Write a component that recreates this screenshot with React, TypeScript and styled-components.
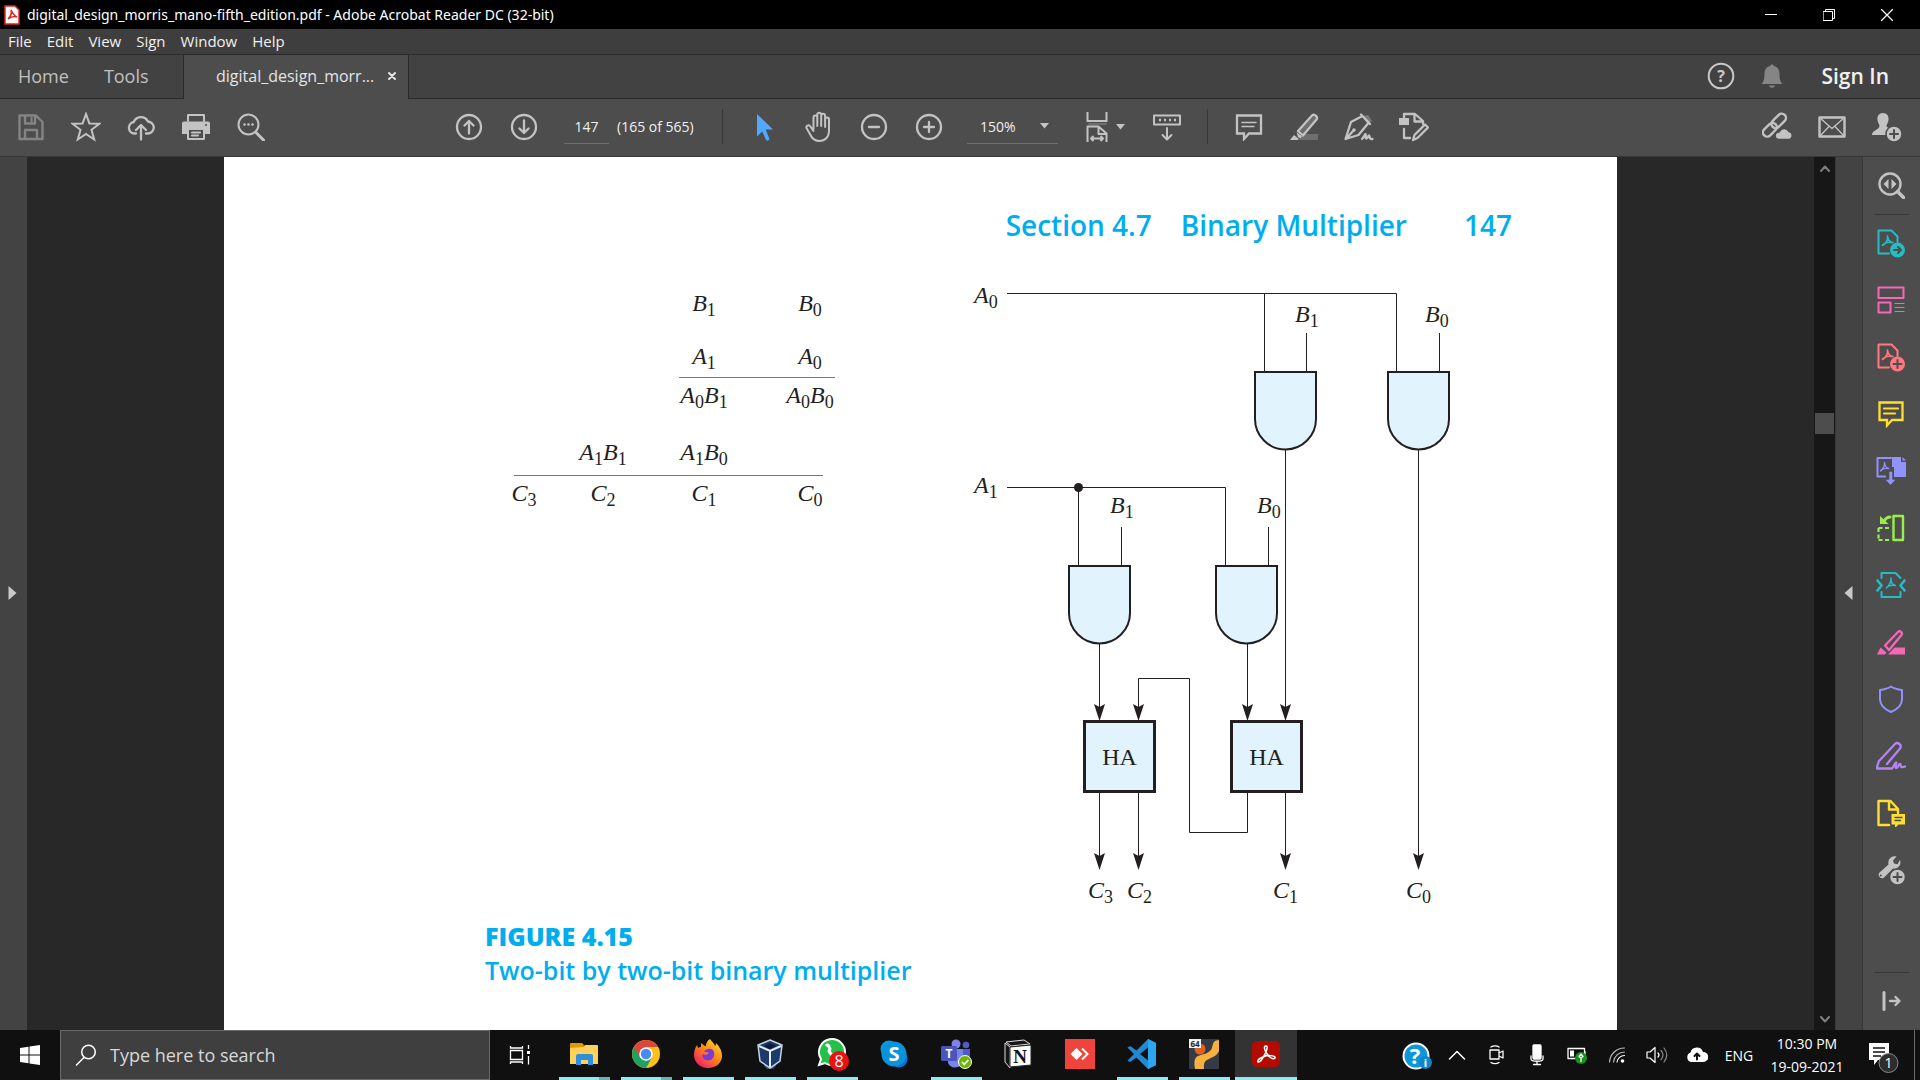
import React from "react";
import styled, { createGlobalStyle } from "styled-components";

const GlobalStyle = createGlobalStyle`
  * { box-sizing: border-box; }
  body { margin: 0; background: #282828; font-family: "Open Sans", "Noto Sans", sans-serif; }
  button, input, select { font: inherit; color: inherit; background: none; border: 0; padding: 0; margin: 0; }
  svg { display: block; flex: none; }
`;

const Shell = styled.div`
  display: flex;
  flex-direction: column;
  height: 100vh;
  overflow: hidden;
  color: #f0f0f0;
  font-size: 14px;
`;

/* ---------- title, menu and tabs ---------- */

const TitleBar = styled.header`
  display: flex;
  align-items: center;
  height: 29px;
  padding-left: 4px;
  background: #000;
  color: #fff;
`;
const Title = styled.span`
  flex: 1;
  margin-left: 7px;
  font-family: "Noto Sans", sans-serif;
  white-space: nowrap;
`;
const WindowButton = styled.button`
  display: grid;
  place-items: center;
  width: 58px;
  height: 29px;
  &:last-child { margin-right: 4px; }
`;
const MenuBar = styled.nav`
  display: flex;
  align-items: center;
  gap: 15px;
  height: 26px;
  padding: 0 0 1px 8px;
  background: #3e3e3e;
  border-bottom: 1px solid #2a2a2a;
  font-size: 15px;
`;
const MenuItem = styled.button`
  line-height: 22px;
`;
const TabBar = styled.div`
  display: flex;
  height: 44px;
  background: #424242;
`;
const TabStart = styled.div`
  display: flex;
  align-items: center;
  gap: 35px;
  width: 184px;
  padding: 0 0 2px 18px;
  border-bottom: 1px solid #2a2a2a;
  border-right: 1px solid #2a2a2a;
  color: #c0c0c0;
  font-size: 18px;
`;
const TabButton = styled.button``;
const DocTab = styled.div`
  display: flex;
  align-items: center;
  gap: 11px;
  width: 225px;
  padding: 0 0 2px 32px;
  background: #4d4d4d;
  border-right: 1px solid #2a2a2a;
  color: #e4e4e4;
  font-size: 16px;
`;
const DocName = styled.span`
  width: 160px;
  white-space: nowrap;
`;
const TabEnd = styled.div`
  display: flex;
  flex: 1;
  justify-content: flex-end;
  align-items: center;
  padding: 0 31px 1px 0;
  border-bottom: 1px solid #2a2a2a;
`;
const HeaderIcon = styled.button`
  display: grid;
  place-items: center;
  width: 51px;
`;
const SignIn = styled.button`
  margin-left: 24px;
  font-size: 21px;
  font-weight: 600;
  white-space: nowrap;
`;

/* ---------- toolbar ---------- */

const Toolbar = styled.div`
  display: flex;
  align-items: center;
  height: 58px;
  padding: 0 6px 2px 3px;
  background: #4d4d4d;
  border-bottom: 1px solid #383838;
  color: #c3c3c3;
`;
const Group = styled.div<{ $left?: number; $push?: boolean }>`
  display: flex;
  align-items: center;
  margin-left: ${(p) => (p.$push ? "auto" : `${p.$left ?? 0}px`)};
`;
const ToolButton = styled.button<{ $color?: string }>`
  display: flex;
  align-items: center;
  justify-content: center;
  gap: 8px;
  width: 55px;
  height: 55px;
  color: ${(p) => p.$color ?? "#c3c3c3"};
`;
const PageInput = styled.input`
  width: 45px;
  height: 34px;
  margin-left: 13px;
  border-bottom: 1px solid #6e6e6e;
  text-align: center;
  color: #f0f0f0;
`;
const PageCount = styled.label`
  width: 92px;
  margin-left: 8px;
  color: #f0f0f0;
  white-space: nowrap;
`;
const Divider = styled.span`
  width: 1px;
  height: 35px;
  margin: 0 13px;
  background: #383838;
`;
const ZoomBox = styled.label`
  display: grid;
  grid-template-columns: 1fr 27px;
  align-items: center;
  width: 91px;
  height: 34px;
  margin: 0 13px 0 11px;
  border-bottom: 1px solid #6e6e6e;
`;
const ZoomSelect = styled.select`
  appearance: none;
  grid-area: 1 / 1 / 2 / 3;
  width: 100%;
  padding-left: 13px;
  color: #f0f0f0;
`;
const ZoomCaret = styled.span`
  grid-area: 1 / 2 / 2 / 3;
  display: grid;
  place-items: center;
  pointer-events: none;
`;

/* ---------- document area ---------- */

const Workspace = styled.main`
  display: flex;
  flex: 1;
  min-height: 0;
  background: #282828;
`;
const Rail = styled.button<{ $width: number }>`
  display: grid;
  place-items: center;
  width: ${(p) => p.$width}px;
  padding: 0 2px 2px 0;
  background: #434343;
  color: #c9c9c9;
`;
const Canvas = styled.div`
  display: flex;
  flex: 1;
  justify-content: center;
  min-width: 0;
  overflow: hidden;
`;
const Page = styled.article`
  flex: 0 1 1393px;
  padding: 52px 105px 0 261px;
  background: #fff;
  color: #231f20;
`;
const RunningHead = styled.div`
  display: flex;
  justify-content: flex-end;
  gap: 29px;
  color: #00aeef;
  font: 600 28px/32px "Open Sans", sans-serif;
  white-space: nowrap;
`;
const Folio = styled.span`
  margin-left: 28px;
`;
const Figure = styled.figure`
  display: flex;
  flex-wrap: wrap;
  column-gap: 105px;
  margin: 39px 0 0;
`;
const Equation = styled.div`
  display: grid;
  grid-template-columns: 78px 80px 122px 90px;
  grid-template-rows: 53px 35px 4px 57px 37px 4px 28px;
  justify-items: center;
  align-items: start;
  margin-top: 9px;
  font: italic 24px/28px "Liberation Serif", serif;
`;
const Term = styled.span<{ $col: number; $row: number }>`
  grid-column: ${(p) => p.$col};
  grid-row: ${(p) => p.$row};
  white-space: nowrap;
`;
const Sub = styled.sub`
  font-size: 18px;
  font-style: normal;
  line-height: 0;
  vertical-align: -5px;
`;
const SumLine = styled.span<{ $row: number; $from: number; $left: number; $right: number }>`
  grid-column: ${(p) => p.$from} / 5;
  grid-row: ${(p) => p.$row};
  justify-self: stretch;
  height: 1px;
  margin: 0 ${(p) => p.$right}px 0 ${(p) => p.$left}px;
  background: #00a0dc;
`;
const Caption = styled.figcaption`
  flex-basis: 100%;
  margin-top: 9px;
  color: #00aeef;
  font: 600 25px/34px "Open Sans", sans-serif;
`;
const FigureNumber = styled.div`
  font-weight: 800;
`;

const ScrollBar = styled.div`
  display: flex;
  flex-direction: column;
  width: 22px;
  padding: 0 1px;
  background: #171717;
  border-right: 1px solid #383838;
  color: #7e7e7e;
`;
const ScrollArrow = styled.button`
  display: grid;
  place-items: center;
  height: 22px;
`;
const ScrollSpace = styled.span<{ $grow: number }>`
  flex: ${(p) => p.$grow};
`;
const ScrollThumb = styled.div`
  height: 21px;
  background: #4d4d4d;
`;
const SidePanel = styled.aside`
  display: flex;
  flex-direction: column;
  align-items: center;
  width: 58px;
  padding-right: 1px;
  background: #4d4d4d;
  border-left: 1px solid #383838;
`;
const SideButton = styled.button<{ $color?: string }>`
  display: grid;
  place-items: center;
  width: 56px;
  height: 57px;
  padding-bottom: 1px;
  color: ${(p) => p.$color ?? "#c3c3c3"};
`;
const SideRule = styled.span<{ $bottom?: boolean }>`
  width: 35px;
  height: 1px;
  margin-top: ${(p) => (p.$bottom ? "auto" : "0")};
  background: #383838;
`;

/* ---------- taskbar ---------- */

const Taskbar = styled.footer`
  display: flex;
  height: 50px;
  background: #101010;
  color: #fff;
`;
const StartButton = styled.button`
  display: grid;
  place-items: center;
  width: 60px;
`;
const SearchBox = styled.label`
  display: flex;
  align-items: center;
  gap: 13px;
  width: 430px;
  padding-left: 14px;
  background: #3f3f3f;
  border: 1px solid #6a6a6a;
`;
const SearchInput = styled.input`
  flex: 1;
  font-size: 18px;
  outline: none;
  &::placeholder { color: #d8d8d8; opacity: 1; }
`;
const TaskViewButton = styled.button`
  display: grid;
  place-items: center;
  width: 60px;
`;
const AppList = styled.div`
  display: flex;
  margin-left: 3px;
`;
const TaskButton = styled.button<{ $open?: boolean; $active?: boolean; $stack?: boolean }>`
  display: grid;
  grid-template-rows: 1fr 3px;
  justify-items: center;
  align-items: center;
  width: 62px;
  background: ${(p) => (p.$active ? "#333" : "none")};
  &::after {
    content: "";
    grid-row: 2;
    width: ${(p) => (p.$active ? "62px" : "51px")};
    height: 3px;
    background: ${(p) =>
      !p.$open ? "none" : p.$stack ? "linear-gradient(90deg, #8fe8f2 40px, #6cb0b8 40px)" : "#8fe8f2"};
  }
`;
const Tray = styled.div`
  display: flex;
  align-items: center;
  margin-left: auto;
`;
const TrayButton = styled.button<{ $wide?: boolean }>`
  display: grid;
  place-items: center;
  width: ${(p) => (p.$wide ? 44 : 40)}px;
  height: 50px;
`;
const Clock = styled.button`
  width: 90px;
  margin-left: 1px;
  line-height: 23px;
  text-align: center;
`;
const Notices = styled.button`
  margin: 5px 15px 0 17px;
`;
const ShowDesktop = styled.button`
  width: 6px;
  height: 50px;
  border-left: 1px solid #6a6a6a;
`;

/* ---------- icons ---------- */

type IconProps = { w?: number; h?: number; sw?: number; children: React.ReactNode };
const Line = ({ w = 28, h = 28, sw = 2, children }: IconProps) => (
  <svg width={w} height={h} viewBox={`0 0 ${w} ${h}`} fill="none" stroke="currentColor" strokeWidth={sw} strokeLinejoin="round" strokeLinecap="round" aria-hidden>
    {children}
  </svg>
);

const fillOnly = { fill: "currentColor", stroke: "none" };
const PANEL = "#4d4d4d";

const Caret = () => (
  <svg width="9" height="6" viewBox="0 0 9 6" aria-hidden><path d="M0 0h9L4.500 5.500z" fill="#c3c3c3" /></svg>
);

const SaveIcon = () => (
  <Line sw={2.4}><path d="M2.500 2.500h16.500l6.500 6.500v17h-23zM8 3v7.500h10V3M8 25.500V17h12v8.500" /><path d="M14.500 5v4" strokeWidth="2" /></Line>
);
const StarIcon = () => (
  <Line w={30} h={30}><path d="M15 2l3.400 9.400 10 .3-7.900 6.100 2.700 9.700L15 21.900l-8.200 5.600 2.700-9.700-7.900-6.100 10-.3z" strokeLinejoin="miter" /></Line>
);
const CloudUpIcon = () => (
  <Line sw={2.300}><path d="M9 20.500H7.500a5.800 5.800 0 01-.8-11.500A7.800 7.800 0 0121 8.500a6 6 0 01-.5 12h-1.500M14 26.500V13M9 17l5-5 5 5" /></Line>
);
const PrintIcon = () => (
  <Line>
    <path d="M6 8V2h16v6" />
    <path d="M2 8.500h24a2 2 0 012 2V21h-5v-4H5v4H0V10.500a2 2 0 012-2z" {...fillOnly} />
    <path d="M6 17v9h16v-9M10 19.500h8M10 22.500h6" /><circle cx="24" cy="12" r="1" fill={PANEL} stroke="none" />
  </Line>
);
const FindIcon = () => (
  <Line>
    <circle cx="11.500" cy="11.500" r="10" /><path d="M19 19.500l8 8" strokeWidth="3" />
    <circle cx="7.500" cy="11.500" r="1.300" {...fillOnly} /><circle cx="11.500" cy="11.500" r="1.300" {...fillOnly} /><circle cx="15.500" cy="11.500" r="1.300" {...fillOnly} />
  </Line>
);
const RoundIcon = ({ d, sw = 2.300 }: { d: string; sw?: number }) => (
  <Line sw={sw}><circle cx="14" cy="14" r="12" /><path d={d} /></Line>
);
const PointerIcon = () => (
  <Line><path d="M7 1v22.500l5.200-5 3.600 8a1.800 1.800 0 003.300-1.500L15.700 16.500H23z" {...fillOnly} /></Line>
);
const HandIcon = () => (
  <Line w={30} h={32}>
    <path d="M9.500 18V6.500a1.900 1.900 0 013.800 0V15M13.300 14V3.800a1.900 1.900 0 013.900 0V15M17.200 14V4.800a1.900 1.900 0 013.900 0V16M21.100 15V8.500a1.900 1.900 0 013.900 0V20c0 6-4 10-9.500 10-5 0-7.500-2.500-9-6L2.500 17c-.8-2.200 2-3.800 3.600-1.800L9.500 20" />
  </Line>
);
const FitIcon = () => (
  <Line w={22} h={30}>
    <path d="M1.500 0v9h19V0" strokeLinecap="butt" strokeLinejoin="miter" /><path d="M3 12h17" stroke="#6e6e6e" strokeWidth="2" />
    <path d="M1.500 30V14.500h11l8 7V30M12.500 15v7h8M5 26.500h12M7.500 24L5 26.500 7.500 29M14.500 24l2.500 2.500-2.500 2.500" strokeLinecap="butt" />
  </Line>
);
const KeyboardIcon = () => (
  <Line>
    <path d="M1 2.500h26v9H1zM14 15v11M9.500 22l4.500 4.500 4.500-4.500" /><path d="M6 7h17" strokeWidth="2.500" strokeDasharray="2 3" strokeLinecap="butt" />
  </Line>
);
const CommentIcon = () => (
  <Line><path d="M2 2.500h24v18H14l-5 5.500v-5.500H2z" strokeLinejoin="miter" strokeWidth="2.300" /><path d="M7 9.500h14M7 13.500h12" strokeWidth="1.500" /></Line>
);
const HighlightIcon = () => (
  <Line w={30}>
    <path d="M10 27l5-6h14v6z" fill="#6e6e6e" stroke="none" />
    <path d="M9 18L23 2.500c2-2 6.500 1 4.500 4L14 22.500z" fill="#6e6e6e" strokeWidth="2.300" /><path d="M7.500 19l5.500 4.500-1.500 2-2.500-1.500zM1 27l4-5 5 4-1.500 1z" {...fillOnly} />
  </Line>
);
const SignIcon = () => (
  <Line w={30} sw={2.300}>
    <path d="M18 3l6-1 4 6-4.500 3z" fill="#7a7a7a" stroke="none" />
    <path d="M17 1.500l9 9.500M17.500 3.500L7 9 1.500 26l13-4L24 10.500M2 26l7-8" /><circle cx="10" cy="17" r="1.800" {...fillOnly} />
    <path d="M18 26c2-2 3-5 3.500-5s-.5 5 1 4.500 1.500-3 2.500-3-.5 4 3.500 3.500" />
  </Line>
);
const EditPdfIcon = () => (
  <Line w={30} h={30} sw={2.300}>
    <path d="M0 6h10v7H0z" {...fillOnly} />
    <path d="M5 6V2h11l8 7v3M15.500 2v7.500H24M5 17v9h6" /><path d="M14 28l1.500-5L26 12.500l3 3L18.500 26z" />
  </Line>
);
const LinkCloudIcon = () => (
  <Line w={30} h={30} sw={2.400}>
    <g transform="rotate(-45 13 13)"><rect x="-2" y="8.500" width="16" height="8.500" rx="4.250" /><rect x="10" y="8.500" width="17" height="8.500" rx="4.250" /></g>
    <path d="M17 28a4 4 0 010-8.500 5.500 5.500 0 0110-.5 4.600 4.600 0 010 9z" fill="currentColor" stroke={PANEL} />
  </Line>
);
const MailIcon = () => (
  <Line w={28} h={24}><path d="M1.500 2.500h25v19h-25z" strokeWidth="2.400" /><path d="M2 3l12 10.500L26 3M2 21l9-9.500M26 21l-9-9.500" strokeWidth="1.300" /></Line>
);
const AddUserIcon = () => (
  <Line w={30} h={30}>
    <path d="M11 1c4 0 6 3 5.500 7-.3 3-2 4-2 6s6 3 7.500 5v4H0c0-5 7-5 7.500-9 0-2-1.700-3-2-6C5 4 7 1 11 1z" {...fillOnly} />
    <circle cx="22" cy="22" r="8" fill="currentColor" stroke={PANEL} strokeWidth="1.500" /><path d="M22 18v8M18 22h8" stroke={PANEL} />
  </Line>
);
const SideSearchIcon = () => (
  <Line><circle cx="13" cy="13" r="10.500" strokeWidth="2.400" /><path d="M20.500 20.500l6 6" strokeWidth="3.500" /><path d="M11.500 8v10L6.500 13zM14.500 8v10l5-5z" {...fillOnly} /></Line>
);
const Swoosh = "M11.500 8c.5 4-1 7-5 9.500M11.500 8c.3 4 2.500 6 5.500 6.500M6.500 17c2-2 6-3 9-2.500";
const PdfBadgeIcon = ({ d }: { d: string }) => (
  <Line w={30} h={30}>
    <path d="M13 25.500H2.500v-23h13l6 6V14" /><path d={Swoosh} strokeWidth="1.600" />
    <circle cx="21.500" cy="22" r="7.500" {...fillOnly} /><path d={d} stroke={PANEL} strokeWidth="2" />
  </Line>
);
const OrganizeIcon = () => (
  <Line><path d="M1.500 1.500h25v10.500h-25zM1.500 16.500h12v10h-12z" /><path d="M18 17.500h9M18 21.500h9M18 25.500h9" strokeWidth="1.200" /></Line>
);
const SideCommentIcon = () => (
  <Line><path d="M2.500 2.500h23v17.500H15l-5 5.500V20H2.500z" strokeLinejoin="miter" strokeWidth="2.300" /><path d="M7 8.500h14M7 13.500h11" strokeWidth="2.200" /></Line>
);
const CombineIcon = () => (
  <Line w={30} h={30}>
    <path d="M15 2H1.500v18.500H9" /><path d="M8.500 6.500c.5 4-1 6-4 8.500M8.500 7c.5 4 2 5 4 5.500M5 14c2-1.500 4-2 7-1.500" strokeWidth="1.400" />
    <path d="M16 1h9v5h5v15H18V11h-2z" {...fillOnly} /><path d="M26.500 1v3.500H30z" {...fillOnly} />
    <path d="M12.500 15v8H8l6.500 7 6.500-7h-4v-8z" fill="currentColor" stroke={PANEL} strokeWidth="1.500" />
  </Line>
);
const RotateIcon = () => (
  <Line><path d="M16.500 2h9.500v24h-9.500z" strokeWidth="2.400" /><path d="M1.500 14h11M1.500 26h11M1.500 14v12" strokeDasharray="4 2.500" strokeWidth="2.200" strokeLinecap="butt" /><path d="M3 2v8h8.500z" {...fillOnly} /><path d="M7 7c1.500-2.500 3-4 6-4" strokeWidth="3" /></Line>
);
const CompressIcon = () => (
  <Line w={30}>
    <path d="M5.500 7V2h14l5 5M5.500 21v5h19v-5" /><path d="M1.500 9.500l4 5-4 5M28.500 9.500l-4 5 4 5" strokeWidth="2.600" /><path d="M15 7c0 4-1 7-4.500 10M15 8c0 4 2 6 4.500 6.500M11 16c2-1.500 5-2 8-1.500" strokeWidth="1.500" />
  </Line>
);
const RedactIcon = () => (
  <Line><path d="M8 17.500L21 4c2-2 5 .5 3.500 3L12 22z" strokeWidth="2.300" /><path d="M0 26.500l3.500-7 6 5-1.500 2zM11 26.500l6.500-7H28v7z" {...fillOnly} /></Line>
);
const ShieldIcon = () => (
  <Line><path d="M14 1.500c3.500 2.500 6.500 3 11 3.500v9c0 6-5 10.500-11 13-6-2.500-11-7-11-13V5c4.500-.5 7.500-1 11-3.500z" /></Line>
);
const FillSignIcon = () => (
  <Line w={30} h={30} sw={2.300}><path d="M3 20L19 3c2.500-2.500 7.500 1 5 4.500L11 23M3 20c-1 3-2 5-2 7.500h15c2-2 3-6 4-6s-1.500 6 .5 5.500 2-4 3.500-4-1 5 5 2.500" /></Line>
);
const ReviewIcon = () => (
  <Line><path d="M12 26H1.500V2h12l7.500 8v4M12 2v8.500h9" strokeWidth="2.400" /><path d="M14.500 15H28v10.500h-6.500L18 29v-3.500h-3.500z" {...fillOnly} /><path d="M18 18.500h7M18 21.500h5.500" stroke={PANEL} strokeWidth="1.400" /></Line>
);
const MoreToolsIcon = () => (
  <Line w={30} h={30}>
    <path d="M3 18L12.500 9.500C11.500 4 15.500 0 20.500 1.500L17 5.500l1 3 3.500.7L24 5c2 5-2.500 9.500-7 8.500L7.500 23A3.600 3.600 0 013 18z" {...fillOnly} /><circle cx="4.800" cy="20.500" r="1" fill={PANEL} stroke="none" />
    <circle cx="21.500" cy="22" r="8" fill="currentColor" stroke={PANEL} strokeWidth="1.500" /><path d="M21.500 18v8M17.500 22h8" stroke={PANEL} />
  </Line>
);
const CollapseIcon = () => (
  <Line w={20} h={20}><path d="M3 1.500v17" strokeWidth="3" /><path d="M9 10h9.500M14.500 6l4 4-4 4" strokeWidth="2.300" /></Line>
);

/* ---------- circuit drawing ---------- */

const Wiring = styled.svg`
  font: italic 24px "Liberation Serif", serif;
`;

const Label = ({ x, y, v, n }: { x: number; y: number; v: string; n: string }) => (
  <text x={x} y={y} fill="#231f20">{v}<tspan dy="5" fontSize="18" fontStyle="normal">{n}</tspan></text>
);
const Gate = ({ x, y }: { x: number; y: number }) => (
  <path d={`M${x} ${y}h61v47a30.500 30.500 0 01-61 0z`} fill="#e1f3fd" stroke="#231f20" strokeWidth="2" />
);
const Adder = ({ x, y }: { x: number; y: number }) => (
  <g>
    <rect x={x} y={y} width="70" height="70" fill="#e1f3fd" stroke="#231f20" strokeWidth="3" />
    <text x={x + 35} y={y + 43} textAnchor="middle" fontStyle="normal" fill="#231f20">HA</text>
  </g>
);
const Arrow = ({ x, y }: { x: number; y: number }) => (
  <path d={`M${x} ${y}l-5.500-17 5.500 3 5.500-3z`} fill="#231f20" />
);

const Circuit = () => (
  <Wiring width="500" height="630" viewBox="960 280 500 630" role="img" aria-label="Two-bit multiplier circuit">
    <g fill="none" stroke="#231f20" strokeWidth="1">
      <path d="M1007 293.500h389.500V371M1264.500 293.500V371M1306.500 333V371M1439.500 333V371" />
      <path d="M1007 487.500h218.500V565M1078.500 487.500V565M1121.500 527V565M1268.500 527V565" />
      <path d="M1285.500 450V710M1418.500 450V860M1099.500 644V710M1247.500 644V710" />
      <path d="M1247.500 793V832.500H1189.500V678.500H1138.500V710M1099.500 793V860M1138.500 793V860M1285.500 793V860" />
    </g>
    <circle cx="1078.500" cy="487.500" r="4.500" fill="#231f20" />
    <Gate x={1255} y={372} /><Gate x={1388} y={372} /><Gate x={1069} y={566} /><Gate x={1216} y={566} />
    <Arrow x={1099.5} y={721} /><Arrow x={1138.5} y={721} /><Arrow x={1247.5} y={721} /><Arrow x={1285.5} y={721} />
    <Arrow x={1099.5} y={870} /><Arrow x={1138.5} y={870} /><Arrow x={1285.5} y={870} /><Arrow x={1418.5} y={870} />
    <Adder x={1084.5} y={721.5} /><Adder x={1231.5} y={721.5} />
    <Label x={974} y={303} v="A" n="0" /><Label x={974} y={493} v="A" n="1" />
    <Label x={1295} y={322} v="B" n="1" /><Label x={1425} y={322} v="B" n="0" />
    <Label x={1110} y={513} v="B" n="1" /><Label x={1257} y={513} v="B" n="0" />
    <Label x={1088} y={898} v="C" n="3" /><Label x={1127} y={898} v="C" n="2" />
    <Label x={1273} y={898} v="C" n="1" /><Label x={1406} y={898} v="C" n="0" />
  </Wiring>
);

/* ---------- taskbar pictures ---------- */

const Pic = ({ w = 30, h = 30, children }: { w?: number; h?: number; children: React.ReactNode }) => (
  <svg width={w} height={h} viewBox={`0 0 ${w} ${h}`} aria-hidden>{children}</svg>
);
const tile = { fontFamily: "Open Sans, sans-serif", textAnchor: "middle" as const };

const apps: { name: string; open?: boolean; stack?: boolean; active?: boolean; art: React.ReactNode }[] = [
  { name: "File Explorer", open: true, stack: true, art: (
    <Pic><path d="M1 5a1 1 0 011-1h11l2 2-1 3H1z" fill="#e19a00" /><path d="M1 9l13-1 2-2h12a1 1 0 011 1v18H1z" fill="#ffd05a" /><path d="M7 26V17a2 2 0 012-2h13a2 2 0 012 2v9h-5v-5h-7v5z" fill="#2f8fdd" /></Pic>
  ) },
  { name: "Chrome", open: true, stack: true, art: (
    <Pic><circle cx="15" cy="15" r="14" fill="#fbc116" /><path d="M2.900 8A14 14 0 0015 29l6-10.500-6-3.500z" fill="#1da260" /><path d="M2.900 8A14 14 0 0127.100 8H15l-6 10z" fill="#e0453a" /><circle cx="15" cy="15" r="6.800" fill="#fff" /><circle cx="15" cy="15" r="5.200" fill="#4a8af4" /></Pic>
  ) },
  { name: "Firefox", open: true, art: (
    <Pic>
      <defs><linearGradient id="fox" x1="1" y1="0" x2="0.200" y2="1"><stop offset="0" stopColor="#ffe53e" /><stop offset="0.500" stopColor="#ff8a16" /><stop offset="1" stopColor="#f5156c" /></linearGradient></defs>
      <path d="M17 0c2 3 4 4 5 7 1-1 1-2 1-3 4 4 6 8 6 13 0 7-6 12-14 12S1 23 1 16c0-4 1-7 3-10l1 3c1-1 2-1 3-1V4c2 1 3 3 5 3 0-3 1-5 4-7z" fill="url(#fox)" />
      <path d="M15 10c5-1 7 3 6 7s-6 6-10 3c-2-2-2-4-1-5 3 2 4 0 6-1-1-1-4 0-5-2 1-1 2-1 4-2z" fill="#7b3ad6" />
    </Pic>
  ) },
  { name: "VirtualBox", open: true, art: (
    <Pic><path d="M9 24h12v3l-3 3h-6l-3-3z" fill="#3a4660" /><path d="M15 1l12 5-2 16-10 7-10-7L3 6z" fill="#1d3b69" stroke="#c4d3e6" strokeWidth="1.500" /><path d="M15 12v16M4 7l11 5 11-5" stroke="#e6eef8" strokeWidth="2" fill="none" /><path d="M15 4l6 3-6 3-6-3z" fill="#0d1c36" /></Pic>
  ) },
  { name: "WhatsApp", open: true, art: (
    <Pic w={34} h={34}><path d="M4 28l2-6A13 13 0 1110 26z" fill="#25c04c" stroke="#fff" strokeWidth="2" /><path d="M11 9c2-2 3 0 4 3l-1 2c1 3 3 4 5 5" stroke="#fff" strokeWidth="3" fill="none" /><circle cx="24" cy="24" r="10" fill="#f01010" /><text x="24" y="30" fontSize="16" fill="#fff" {...tile}>8</text></Pic>
  ) },
  { name: "Skype", art: (
    <Pic><circle cx="10" cy="10" r="8.500" fill="#0a97dd" /><circle cx="20" cy="20" r="8.500" fill="#0678d4" /><circle cx="15" cy="15" r="12.500" fill="#0a92dc" /><text x="15" y="22" fontSize="20" fontWeight="700" fill="#fff" {...tile}>S</text></Pic>
  ) },
  { name: "Teams", open: true, art: (
    <Pic w={32}><circle cx="16" cy="5" r="4.500" fill="#7b83eb" /><circle cx="26" cy="6" r="3.300" fill="#5059c9" /><path d="M20 10h10v10a6 6 0 01-8 3z" fill="#5059c9" /><path d="M8 10h15v12a8 8 0 01-15 2z" fill="#7b83eb" /><rect x="1" y="7" width="16" height="15" rx="1.500" fill="#4b53bc" /><text x="9" y="19" fontSize="12" fontWeight="700" fill="#fff" {...tile}>T</text><circle cx="25" cy="23" r="6.500" fill="#6bb700" stroke="#fff" /><path d="M22 23l2.300 2.500 4-4.500" stroke="#fff" strokeWidth="1.800" fill="none" /></Pic>
  ) },
  { name: "Notion", art: (
    <Pic><path d="M2 4l5 4v21l-5-6zM3 3l18-2 6 4L8 7z" fill="#161616" stroke="#ddd" /><path d="M7 8l21-2v20L7 28z" fill="#fff" stroke="#222" /><text x="17" y="24" fontSize="19" fontWeight="700" fill="#111" fontFamily="Liberation Serif, serif" textAnchor="middle">N</text></Pic>
  ) },
  { name: "AnyDesk", art: (
    <Pic><path d="M0 0h30v30H0z" fill="#ef443b" /><path d="M5.500 15l6-6 6 6-6 6z" fill="#fff" /><path d="M17 9.500l5.500 5.500-5.500 5.500" stroke="#fff" strokeWidth="2" fill="none" /></Pic>
  ) },
  { name: "Visual Studio Code", open: true, art: (
    <Pic><path d="M21 0l8 4v22l-8 4L9.500 18.500 3 23l-2.500-1.500L7 15 .5 8.500 3 7l6.500 4.500zM21 8.500L13 15l8 6.500z" fill="#1f8ad2" fillRule="evenodd" /><path d="M21 0l8 4v22l-8 4z" fill="#2aa7f0" /></Pic>
  ) },
  { name: "Proteus", open: true, art: (
    <Pic><path d="M0 0h30v30H0z" fill="#343a46" /><path d="M30 1c-6 0-6 4-7 8-2 5-8 6-14 8-4 2-4 6-3 13h9c-1-9 3-9 9-12 4-2 5-4 6-6z" fill="#f8b13c" /><circle cx="11" cy="10" r="5.500" fill="#e0621c" /><path d="M0 0h12v9H0z" fill="#f3f3f3" /><text x="6" y="8" fontSize="8" fontWeight="700" fill="#222" {...tile}>64</text></Pic>
  ) },
  { name: "Acrobat Reader", open: true, active: true, art: (
    <Pic><rect x="1" y="2" width="28" height="26" rx="5" fill="#b30b00" /><path d="M15 7c-3 0-1 5 1 8s6 6 8 4c1-3-8-3-12-1-3 1-6 3-5 5 3 1 6-6 8-10 1-3 2-6 0-6z" stroke="#fff" strokeWidth="1.500" fill="none" /></Pic>
  ) },
];

const trayIcons: { name: string; art: React.ReactNode }[] = [
  { name: "Support", art: <Pic><circle cx="14" cy="16" r="13.500" fill="#fff" /><circle cx="14" cy="16" r="11.500" fill="#0d96d9" /><text x="13" y="24" fontSize="22" fontWeight="700" fill="#fff" {...tile}>?</text><circle cx="23.500" cy="22.500" r="6.500" fill="#0d87c9" /><text x="23.500" y="27" fontSize="11" fontWeight="700" fill="#fff" {...tile}>i</text></Pic> },
  { name: "Show hidden icons", art: <Line w={18} h={10} sw={1.500}><path d="M1.500 9L9 1.500 16.500 9" /></Line> },
  { name: "Camera", art: <Line w={16} h={20} sw={1.300}><path d="M1 5h9v9H1zM10 8l4-2v7l-4-2M2 2c2-1.500 6-1.500 8 0M2 17.500c2 1.500 6 1.500 8 0" /></Line> },
  { name: "Microphone", art: <Line w={14} h={22} sw={1.300}><rect x="3" y="1" width="8" height="14" rx="1" fill="#fff" /><path d="M1 12v3c0 3 12 3 12 0v-3M7 18v2.500M3.500 20.500h7" /></Line> },
  { name: "Battery", art: <Line w={20} h={18} sw={1.300}><path d="M1 2.500h16.500v10H1zM18 5.500v4" /><path d="M3 4.500h4v6H3z" {...fillOnly} /><circle cx="14" cy="12" r="6" fill="#16911d" stroke="none" /><path d="M14 15.500V12l-2-1.500L14 8l2 2.500-2 1.500" /></Line> },
  { name: "Network", art: <Line w={18} h={18} sw={1.200}><path d="M5.500 16A11 11 0 0116.500 6M1.500 16A15 15 0 0116.500 2" opacity="0.700" /><path d="M9 16a7.500 7.500 0 017.500-6.500" /><circle cx="14.500" cy="15" r="1.800" {...fillOnly} /></Line> },
  { name: "Volume", art: <Line w={22} h={18} sw={1.200}><path d="M1 6h3l5-4.500v15L4 12H1zM12 7q2 2 0 4" /><path d="M15 4.500q4 4.500 0 9M18 2q5.500 7 0 14" opacity="0.500" /></Line> },
  { name: "Cloud backup", art: <Line w={22} h={18}><path d="M5 16a5 5 0 01-.5-9.500A6.500 6.500 0 0117 6a5 5 0 01.5 10z" {...fillOnly} /><path d="M11 13.500V8M8.500 10L11 7.500l2.500 2.500" stroke="#101010" /></Line> },
];

const sideTools: { name: string; color?: string; art: React.ReactNode }[] = [
  { name: "Export PDF", color: "#26bcc4", art: <PdfBadgeIcon d="M18 22h7M22 19l3 3-3 3" /> },
  { name: "Organize pages", color: "#f568b8", art: <OrganizeIcon /> },
  { name: "Create PDF", color: "#ff7880", art: <PdfBadgeIcon d="M21.500 18v8M17.500 22h8" /> },
  { name: "Comment", color: "#ffde33", art: <SideCommentIcon /> },
  { name: "Combine files", color: "#9292fb", art: <CombineIcon /> },
  { name: "Compare", color: "#98ee4c", art: <RotateIcon /> },
  { name: "Compress PDF", color: "#26bcc4", art: <CompressIcon /> },
  { name: "Redact", color: "#f568b8", art: <RedactIcon /> },
  { name: "Protect", color: "#9292fb", art: <ShieldIcon /> },
  { name: "Fill and sign", color: "#b483f5", art: <FillSignIcon /> },
  { name: "Send for comments", color: "#ffde33", art: <ReviewIcon /> },
  { name: "More tools", art: <MoreToolsIcon /> },
];

const terms: [number, number, string][] = [
  [3, 1, "B1"], [4, 1, "B0"], [3, 2, "A1"], [4, 2, "A0"], [3, 4, "A0B1"], [4, 4, "A0B0"],
  [2, 5, "A1B1"], [3, 5, "A1B0"], [1, 7, "C3"], [2, 7, "C2"], [3, 7, "C1"], [4, 7, "C0"],
];

const Tool = ({ name, color, children }: { name: string; color?: string; children: React.ReactNode }) => (
  <ToolButton aria-label={name} $color={color}>{children}</ToolButton>
);

export default function App() {
  return (
    <Shell>
      <GlobalStyle />
      <TitleBar>
        <svg width="16" height="20" viewBox="0 0 16 20" aria-hidden>
          <path d="M1 1h10l4 4v14H1z" fill="#fff" stroke="#e2241b" strokeWidth="1.500" />
          <path d="M7 5c2 4 3 6 6 7-3-1-6 0-9 2 3-3 4-6 3-9z" stroke="#e2241b" strokeWidth="1.500" fill="none" />
        </svg>
        <Title>digital_design_morris_mano-fifth_edition.pdf - Adobe Acrobat Reader DC (32-bit)</Title>
        <WindowButton aria-label="Minimize"><Line w={12} h={12} sw={1}><path d="M0 5.500h12" /></Line></WindowButton>
        <WindowButton aria-label="Restore"><Line w={12} h={12} sw={1}><path d="M.5 2.500h9v9h-9zM2.500 2.500v-2h9v9h-2" /></Line></WindowButton>
        <WindowButton aria-label="Close"><Line w={12} h={12} sw={1.200}><path d="M.5.5l11 11M11.500.5l-11 11" /></Line></WindowButton>
      </TitleBar>
      <MenuBar>
        {["File", "Edit", "View", "Sign", "Window", "Help"].map((m) => <MenuItem key={m}>{m}</MenuItem>)}
      </MenuBar>
      <TabBar>
        <TabStart><TabButton>Home</TabButton><TabButton>Tools</TabButton></TabStart>
        <DocTab>
          <DocName>digital_design_morr...</DocName>
          <TabButton aria-label="Close tab"><Line w={10} h={10}><path d="M2 2l6 6M8 2l-6 6" /></Line></TabButton>
        </DocTab>
        <TabEnd>
          <HeaderIcon aria-label="Help">
            <svg width="28" height="28" viewBox="0 0 28 28" aria-hidden>
              <circle cx="14" cy="14" r="12.300" fill="none" stroke="#c9c9c9" strokeWidth="2" />
              <text x="14" y="20" fontSize="16" fontWeight="700" fill="#c9c9c9" {...tile}>?</text>
            </svg>
          </HeaderIcon>
          <HeaderIcon aria-label="Notifications">
            <svg width="22" height="26" viewBox="0 0 22 26" aria-hidden>
              <path d="M11 1l2 2c4 1 5.500 4 5.500 8 0 5 .5 7 3 10H.5c2.500-3 3-5 3-10 0-4 1.500-7 5.500-8zM8 22.500h6c-.5 3-5.500 3-6 0z" fill="#858585" />
            </svg>
          </HeaderIcon>
          <SignIn>Sign In</SignIn>
        </TabEnd>
      </TabBar>

      <Toolbar>
        <Group>
          <Tool name="Save" color="#848484"><SaveIcon /></Tool>
          <Tool name="Star"><StarIcon /></Tool>
          <Tool name="Upload"><CloudUpIcon /></Tool>
          <Tool name="Print"><PrintIcon /></Tool>
          <Tool name="Find"><FindIcon /></Tool>
        </Group>
        <Group $left={163}>
          <Tool name="Previous page"><RoundIcon d="M14 20.500V8M9.500 12.500L14 8l4.500 4.500" /></Tool>
          <Tool name="Next page"><RoundIcon d="M14 7.500V20M9.500 15.500L14 20l4.500-4.500" /></Tool>
          <PageInput id="page" defaultValue="147" />
          <PageCount htmlFor="page">(165 of 565)</PageCount>
          <Divider />
          <Tool name="Select" color="#52a8ff"><PointerIcon /></Tool>
          <Tool name="Pan"><HandIcon /></Tool>
          <Tool name="Zoom out"><RoundIcon d="M9 14h10" /></Tool>
          <Tool name="Zoom in"><RoundIcon d="M9 14h10M14 9v10" /></Tool>
          <ZoomBox>
            <ZoomSelect aria-label="Zoom" defaultValue="150%"><option>150%</option></ZoomSelect>
            <ZoomCaret><Caret /></ZoomCaret>
          </ZoomBox>
          <Group $left={7}>
            <Tool name="Fit page"><FitIcon /><Caret /></Tool>
          </Group>
          <Group $left={6}>
            <Tool name="Read mode"><KeyboardIcon /></Tool>
          </Group>
          <Divider />
          <Tool name="Comment"><CommentIcon /></Tool>
          <Tool name="Highlight"><HighlightIcon /></Tool>
          <Tool name="Sign"><SignIcon /></Tool>
          <Tool name="Edit PDF"><EditPdfIcon /></Tool>
        </Group>
        <Group $push>
          <Tool name="Share link"><LinkCloudIcon /></Tool>
          <Tool name="Mail"><MailIcon /></Tool>
          <Tool name="Add people"><AddUserIcon /></Tool>
        </Group>
      </Toolbar>

      <Workspace>
        <Rail $width={27} aria-label="Open navigation"><Line w={9} h={14}><path d="M.5 0v14L8.500 7z" {...fillOnly} /></Line></Rail>
        <Canvas>
          <Page>
            <RunningHead><span>Section 4.7</span><span>Binary Multiplier</span><Folio>147</Folio></RunningHead>
            <Figure>
              <Equation>
                {terms.map(([col, row, t]) => (
                  <Term key={t + row} $col={col} $row={row}>
                    {t.match(/../g)!.map((p) => <React.Fragment key={p}>{p[0]}<Sub>{p[1]}</Sub></React.Fragment>)}
                  </Term>
                ))}
                <SumLine $row={3} $from={3} $left={36} $right={20} />
                <SumLine $row={6} $from={1} $left={29} $right={32} />
              </Equation>
              <Circuit />
              <Caption><FigureNumber>FIGURE 4.15</FigureNumber>Two-bit by two-bit binary multiplier</Caption>
            </Figure>
          </Page>
        </Canvas>
        <ScrollBar>
          <ScrollArrow aria-label="Scroll up"><Line w={10} h={7}><path d="M1 6l4-4.500L9 6" /></Line></ScrollArrow>
          <ScrollSpace $grow={234} />
          <ScrollThumb />
          <ScrollSpace $grow={574} />
          <ScrollArrow aria-label="Scroll down"><Line w={10} h={7}><path d="M1 1l4 4.500L9 1" /></Line></ScrollArrow>
        </ScrollBar>
        <Rail $width={26} aria-label="Close tools"><Line w={9} h={14}><path d="M8.500 0v14L.5 7z" {...fillOnly} /></Line></Rail>
        <SidePanel>
          <SideButton aria-label="Search tools"><SideSearchIcon /></SideButton>
          <SideRule />
          {sideTools.map((t) => <SideButton key={t.name} aria-label={t.name} $color={t.color}>{t.art}</SideButton>)}
          <SideRule $bottom />
          <SideButton aria-label="Collapse"><CollapseIcon /></SideButton>
        </SidePanel>
      </Workspace>

      <Taskbar>
        <StartButton aria-label="Start">
          <Pic w={20} h={20}><path d="M0 3l8.500-1.300V9.500H0zM9.500 1.500L20 0v9.500H9.500zM0 10.500h8.500v7.800L0 17zM9.500 10.500H20V20L9.500 18.500z" fill="#fff" /></Pic>
        </StartButton>
        <SearchBox>
          <Line w={22} h={22} sw={1.500}><circle cx="13.500" cy="8" r="6.800" /><path d="M9 13.500L1.500 21" /></Line>
          <SearchInput aria-label="Search" placeholder="Type here to search" />
        </SearchBox>
        <TaskViewButton aria-label="Task view">
          <Line w={22} h={20} sw={1.300}><path d="M1.500 5.500h12v9h-12zM1.500 1v2h12V1M1.500 19v-2h12v2M19.500 0v4M19.500 11v8.500" strokeLinecap="butt" strokeLinejoin="miter" /><path d="M18 6h3v3h-3z" {...fillOnly} /></Line>
        </TaskViewButton>
        <AppList>
          {apps.map((a) => (
            <TaskButton key={a.name} aria-label={a.name} $open={a.open} $stack={a.stack} $active={a.active}>{a.art}</TaskButton>
          ))}
        </AppList>
        <Tray>
          {trayIcons.map((t) => <TrayButton key={t.name} aria-label={t.name}>{t.art}</TrayButton>)}
          <TrayButton $wide aria-label="Input language">ENG</TrayButton>
          <Clock>10:30 PM<br />19-09-2021</Clock>
          <Notices aria-label="Action center">
            <Pic w={30} h={32}><path d="M0 1h20v17H9l-4 5v-5H0z" fill="#fff" /><path d="M4 6h12M4 10h12M4 14h8" stroke="#111" strokeWidth="1.500" /><circle cx="19.500" cy="21" r="9.500" fill="#2e2e2e" stroke="#8a8a8a" /><text x="19.500" y="26" fontSize="14" fill="#fff" {...tile}>1</text></Pic>
          </Notices>
          <ShowDesktop aria-label="Show desktop" />
        </Tray>
      </Taskbar>
    </Shell>
  );
}
